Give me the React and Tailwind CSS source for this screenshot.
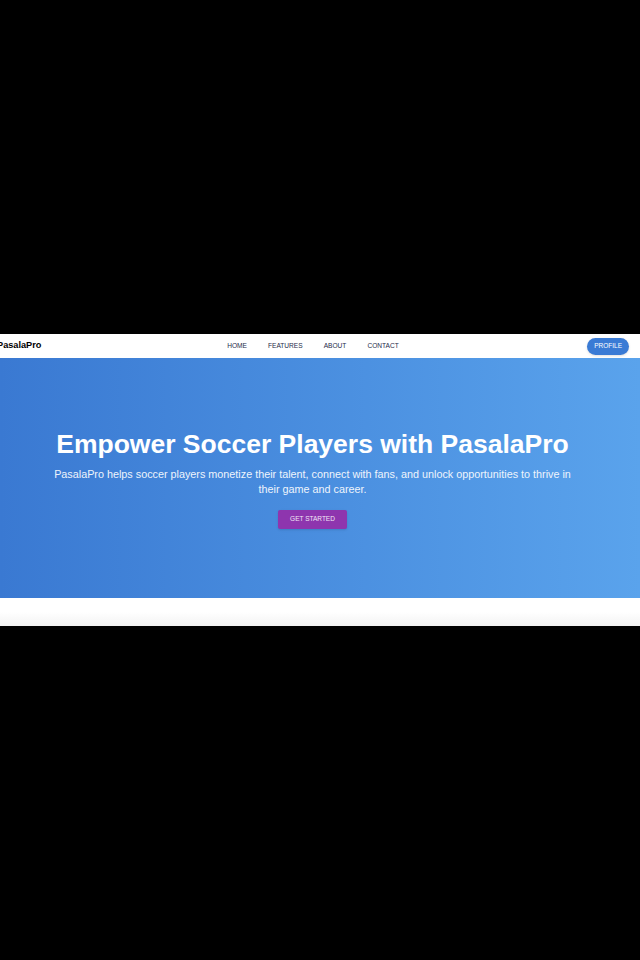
import React from "react";

export default function App() {
  return (
    <div className="h-[960px] w-[640px] bg-black flex flex-col justify-center overflow-hidden" style={{ fontFamily: '"Liberation Sans", Arial, sans-serif' }}>
      <div className="flex flex-col bg-white">
        <nav className="h-[24px] flex items-center bg-white pr-[11px]">
          <div className="w-[150px] ml-[-3px] text-[9.2px] font-bold text-black leading-none">PasalaPro</div>
          <div className="flex-1 flex justify-center gap-[21px] text-[6.6px] text-[#1e2a4a] uppercase leading-none">
            <span>Home</span>
            <span>Features</span>
            <span>About</span>
            <span>Contact</span>
          </div>
          <div className="w-[150px] flex justify-end">
            <button className="h-[17px] px-[7px] rounded-full bg-[#3a7bd5] text-white text-[6.5px] uppercase leading-none shadow-sm">Profile</button>
          </div>
        </nav>
        <section className="h-[240px] bg-gradient-to-r from-[#3a79d2] to-[#5aa3ec] flex flex-col items-center pt-[71px] pr-[15px] text-white text-center">
          <h1 className="text-[26.5px] font-bold leading-[30px]">Empower Soccer Players with PasalaPro</h1>
          <p className="mt-[8px] w-[530px] text-[10.8px] leading-[15px] text-[#eef4fc]">PasalaPro helps soccer players monetize their talent, connect with fans, and unlock opportunities to thrive in their game and career.</p>
          <button className="mt-[13px] h-[19px] w-[69px] rounded-[2px] bg-[#8e35ae] text-[6.5px] uppercase text-[#f0e6f5] leading-none shadow-sm">Get Started</button>
        </section>
        <div className="h-[28px] bg-gradient-to-b from-white via-white to-[#f3f3f3]"></div>
      </div>
    </div>
  );
}
